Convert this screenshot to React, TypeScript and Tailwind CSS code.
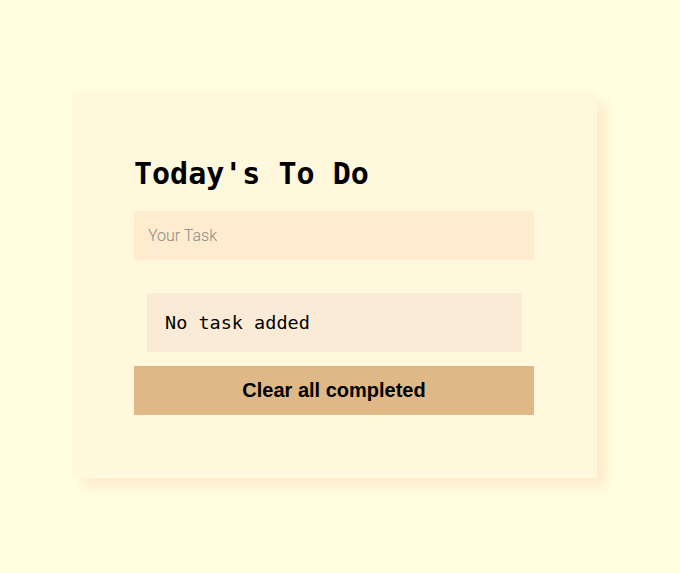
import { useState } from "react"

export default function App() {
  const [task, setTask] = useState("")

  return (
    <div className="min-h-[573px] w-full bg-[#ffffe0] pt-[92px] pl-[72px]">
      <div className="w-[525px] h-[386px] bg-[#fff8dc] px-[62px] pt-[64px] shadow-[10px_10px_12px_#ffebcd] flex flex-col">
        <h1 className="font-['DejaVu_Sans_Mono',monospace] font-bold text-[30px] leading-[35px] text-black">
          Today's To Do
        </h1>
        <input
          value={task}
          onChange={(e) => setTask(e.target.value)}
          placeholder="Your Task"
          className="mt-[20px] h-[49px] w-[400px] bg-[#ffebcd] px-[14px] font-['Roboto',sans-serif] font-light text-[16px] text-black placeholder:text-[#8a8a8a] outline-none"
        />
        <ul className="mt-[33px] mx-[13px]">
          <li className="h-[59px] w-[375px] bg-[#faebd7] pl-[18px] flex items-center font-['DejaVu_Sans_Mono',monospace] text-[18.5px] text-black">
            No task added
          </li>
        </ul>
        <button className="mt-[14px] h-[49px] w-[400px] bg-[#deb887] pb-[2px] font-['Liberation_Sans',Arial,sans-serif] font-bold text-[20px] text-black">
          Clear all completed
        </button>
      </div>
    </div>
  )
}
